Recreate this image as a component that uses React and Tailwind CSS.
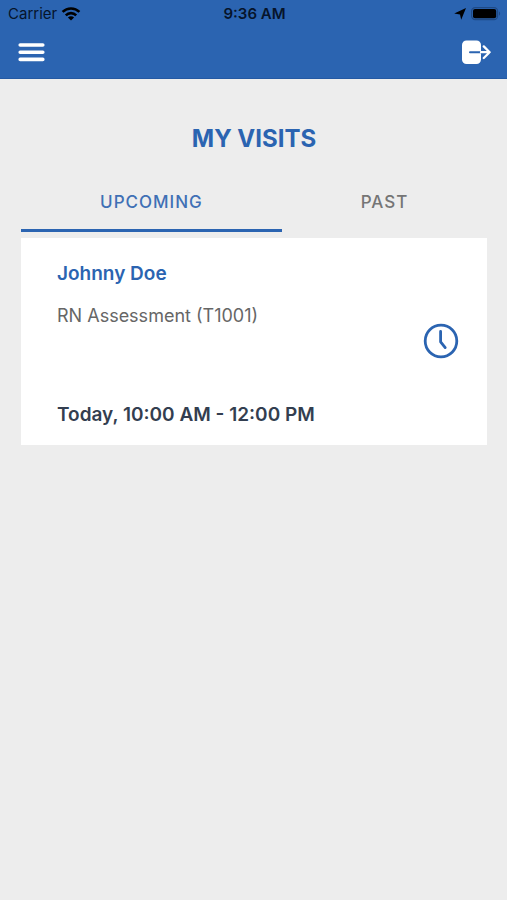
import { useState } from "react";

const visits = [
  {
    id: 1,
    tab: "upcoming",
    patient: "Johnny Doe",
    service: "RN Assessment (T1001)",
    time: "Today, 10:00 AM - 12:00 PM",
  },
];

const tabs = [
  { id: "upcoming", label: "UPCOMING" },
  { id: "past", label: "PAST" },
];

function StatusBar() {
  return (
    <div className="grid grid-cols-3 items-center h-7 pl-2 pr-1.5 text-[15px] leading-5 text-[#06142b]">
      <div className="flex items-center gap-1">
        <span>Carrier</span>
        <svg width="20" height="15" viewBox="0 0 20 15" fill="none" stroke="#000" strokeWidth="2.6">
          <path d="M1.6 4.9a12 12 0 0 1 16.8 0" />
          <path d="M4.8 8.3a7.4 7.4 0 0 1 10.4 0" />
          <path d="M10 13.6 6.9 10.6a4.4 4.4 0 0 1 6.2 0z" fill="#000" stroke="none" />
        </svg>
      </div>
      <span className="text-center font-semibold">9:36 AM</span>
      <div className="flex items-center justify-end gap-1">
        <svg width="12" height="12" viewBox="0 0 12 12" fill="#000">
          <path d="M12 0 7.2 11.8 6 6.4.2 5.6z" />
        </svg>
        <svg width="31" height="15" viewBox="0 0 31 15">
          <rect x="1.6" y="0.6" width="26" height="12" rx="3.6" fill="none" stroke="#1f4a86" strokeWidth="1.2" />
          <rect x="3" y="2" width="23.2" height="9.2" rx="2" fill="#000" />
          <path d="M29 4.5c1.5.6 1.5 3.6 0 4.2z" fill="#1f4a86" />
        </svg>
      </div>
    </div>
  );
}

function Header() {
  return (
    <header className="bg-[#2b64b1] border-b border-[#2459a3]">
      <StatusBar />
      <div className="flex items-center justify-between h-[50px] px-4">
        <button type="button" aria-label="Menu">
          <svg width="30" height="24" viewBox="0 0 30 24" stroke="#fff" strokeWidth="3.6" strokeLinecap="round">
            <path d="M4.2 4h22.6M4.2 11.2h22.6M4.2 18.4h22.6" />
          </svg>
        </button>
        <button type="button" aria-label="Log out">
          <svg width="30" height="26" viewBox="0 0 30 26" fill="none">
            <rect x="1" y="0.5" width="19" height="23.5" rx="4.5" fill="#fff" />
            <path d="M9 12.2h11" stroke="#2b64b1" strokeWidth="2" strokeLinecap="round" />
            <path d="M20 12.2h8.6M22.8 6.4l5.8 5.8-5.8 5.8" stroke="#fff" strokeWidth="2.3" strokeLinecap="round" strokeLinejoin="round" />
          </svg>
        </button>
      </div>
    </header>
  );
}

function VisitCard({ visit }) {
  return (
    <article className="flex items-center justify-between bg-white pl-9 pr-7 pt-6 pb-[18px]">
      <div>
        <h2 className="text-[19px] leading-6 font-semibold text-[#2b64b1]">{visit.patient}</h2>
        <p className="mt-[18px] text-lg leading-6 text-[#666]">{visit.service}</p>
        <p className="mt-[75px] text-[19px] leading-6 font-semibold text-[#333e50]">{visit.time}</p>
      </div>
      <svg className="mb-2" width="36" height="36" viewBox="0 0 36 36" fill="none" stroke="#2b64b1" strokeWidth="2.8" strokeLinecap="round" strokeLinejoin="round">
        <circle cx="18" cy="18" r="15.8" />
        <path d="M17.6 8.4v10.4l4.6 5.8" />
      </svg>
    </article>
  );
}

function App() {
  const [active, setActive] = useState("upcoming");

  return (
    <div className="min-h-screen bg-[#ededed] font-['Inter',sans-serif]">
      <Header />

      <main className="pl-[21px] pr-5 pt-10">
        <h1 className="text-center text-2xl leading-10 font-bold text-[#2b64b1]">MY VISITS</h1>

        <div className="mt-4 grid grid-cols-[56%_44%]" role="tablist">
          {tabs.map((tab) => (
            <button
              key={tab.id}
              type="button"
              role="tab"
              aria-selected={active === tab.id}
              onClick={() => setActive(tab.id)}
              className={`h-[57px] border-b-3 text-[17px] leading-6 font-medium tracking-[1px] ${
                active === tab.id
                  ? "border-[#2b64b1] text-[#3f70b5]"
                  : "border-transparent text-[#757575]"
              }`}
            >
              {tab.label}
            </button>
          ))}
        </div>

        <div className="mt-1.5 space-y-3">
          {visits
            .filter((visit) => visit.tab === active)
            .map((visit) => (
              <VisitCard key={visit.id} visit={visit} />
            ))}
        </div>
      </main>
    </div>
  );
}

export default App;
